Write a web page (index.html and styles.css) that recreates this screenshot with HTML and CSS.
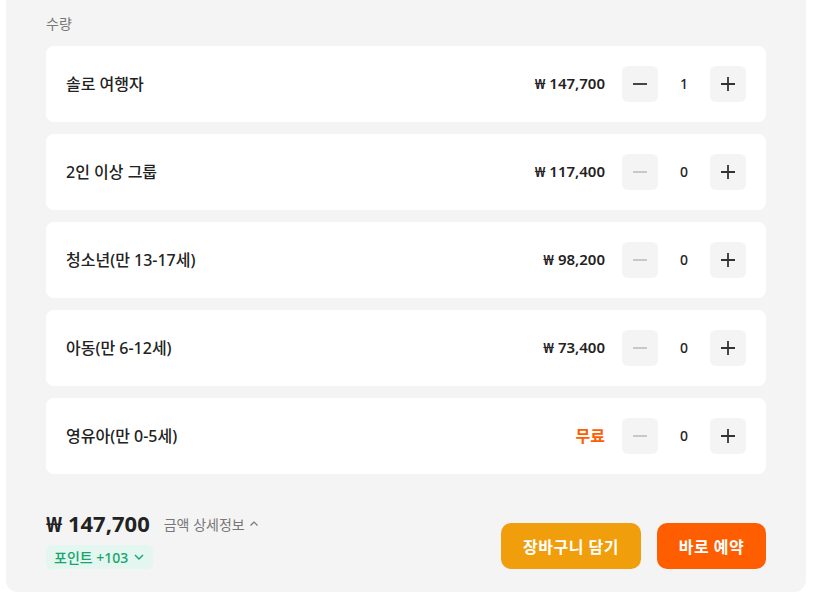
FILE: index.html
```html
<!DOCTYPE html>
<html lang="ko">
<head>
    <meta charset="UTF-8">
    <title>수량 선택</title>
    <link rel="stylesheet" href="styles.css">
</head>
<body>
    <div class="panel">
        <div class="section-label">수량</div>
        <div class="options">
            <div class="option">
                <span class="option-name">솔로 여행자</span>
                <span class="option-price">₩ 147,700</span>
                <div class="stepper">
                    <button class="step-btn"><svg width="14" height="14" viewBox="0 0 14 14"><path d="M0 7h14" stroke="currentColor" stroke-width="1.8"/></svg></button>
                    <span class="qty">1</span>
                    <button class="step-btn"><svg width="14" height="14" viewBox="0 0 14 14"><path d="M0 7h14M7 0v14" stroke="currentColor" stroke-width="1.8"/></svg></button>
                </div>
            </div>
            <div class="option">
                <span class="option-name">2인 이상 그룹</span>
                <span class="option-price">₩ 117,400</span>
                <div class="stepper">
                    <button class="step-btn disabled"><svg width="14" height="14" viewBox="0 0 14 14"><path d="M0 7h14" stroke="currentColor" stroke-width="1.8"/></svg></button>
                    <span class="qty">0</span>
                    <button class="step-btn"><svg width="14" height="14" viewBox="0 0 14 14"><path d="M0 7h14M7 0v14" stroke="currentColor" stroke-width="1.8"/></svg></button>
                </div>
            </div>
            <div class="option">
                <span class="option-name">청소년(만 13-17세)</span>
                <span class="option-price">₩ 98,200</span>
                <div class="stepper">
                    <button class="step-btn disabled"><svg width="14" height="14" viewBox="0 0 14 14"><path d="M0 7h14" stroke="currentColor" stroke-width="1.8"/></svg></button>
                    <span class="qty">0</span>
                    <button class="step-btn"><svg width="14" height="14" viewBox="0 0 14 14"><path d="M0 7h14M7 0v14" stroke="currentColor" stroke-width="1.8"/></svg></button>
                </div>
            </div>
            <div class="option">
                <span class="option-name">아동(만 6-12세)</span>
                <span class="option-price">₩ 73,400</span>
                <div class="stepper">
                    <button class="step-btn disabled"><svg width="14" height="14" viewBox="0 0 14 14"><path d="M0 7h14" stroke="currentColor" stroke-width="1.8"/></svg></button>
                    <span class="qty">0</span>
                    <button class="step-btn"><svg width="14" height="14" viewBox="0 0 14 14"><path d="M0 7h14M7 0v14" stroke="currentColor" stroke-width="1.8"/></svg></button>
                </div>
            </div>
            <div class="option">
                <span class="option-name">영유아(만 0-5세)</span>
                <span class="option-price free">무료</span>
                <div class="stepper">
                    <button class="step-btn disabled"><svg width="14" height="14" viewBox="0 0 14 14"><path d="M0 7h14" stroke="currentColor" stroke-width="1.8"/></svg></button>
                    <span class="qty">0</span>
                    <button class="step-btn"><svg width="14" height="14" viewBox="0 0 14 14"><path d="M0 7h14M7 0v14" stroke="currentColor" stroke-width="1.8"/></svg></button>
                </div>
            </div>
        </div>
        <div class="footer">
            <div class="summary">
                <div class="total-line">
                    <span class="total">₩ 147,700</span>
                    <span class="detail-link">금액 상세정보
                        <svg width="10" height="10" viewBox="0 0 10 10"><path d="M1.5 6.5L5 3l3.5 3.5" fill="none" stroke="currentColor" stroke-width="1.2"/></svg>
                    </span>
                </div>
                <span class="points">포인트 +103
                    <svg width="12" height="12" viewBox="0 0 12 12"><path d="M2 4l4 4 4-4" fill="none" stroke="currentColor" stroke-width="1.4"/></svg>
                </span>
            </div>
            <div class="actions">
                <button class="btn btn-cart">장바구니 담기</button>
                <button class="btn btn-book">바로 예약</button>
            </div>
        </div>
    </div>
</body>
</html>
```

FILE: styles.css
```css
body {
    margin: 0;
    background-color: #fff;
    font-family: "Noto Sans", "Noto Sans CJK KR", sans-serif;
    color: #222;
}
.panel {
    margin: 0 8px 0 6px;
    padding: 14px 40px 23px 40px;
    background-color: #f4f4f4;
    border-radius: 0 0 12px 12px;
}
.section-label {
    font-size: 14px;
    line-height: 19px;
    color: #777;
    margin-bottom: 13px;
}
.options {
    display: flex;
    flex-direction: column;
    gap: 12px;
}
.option {
    display: flex;
    align-items: center;
    height: 76px;
    padding: 0 20px;
    background: #fff;
    border-radius: 8px;
    box-sizing: border-box;
}
.option-name {
    flex: 1;
    font-size: 16px;
    font-weight: 500;
    margin-bottom: 3px;
}
.option-price {
    font-size: 15px;
    font-weight: 600;
    margin-right: 17px;
    margin-bottom: 3px;
}
.option-price.free {
    color: #ff5e00;
    font-size: 16px;
}
.stepper {
    display: flex;
    align-items: center;
}
.step-btn {
    width: 36px;
    height: 36px;
    border: none;
    border-radius: 6px;
    background-color: #f4f4f4;
    color: #333;
    display: flex;
    align-items: center;
    justify-content: center;
    padding: 0;
    cursor: pointer;
}
.step-btn.disabled {
    color: #c4c4c4;
    cursor: default;
}
.qty {
    width: 52px;
    text-align: center;
    font-size: 14px;
    font-weight: 500;
    margin-bottom: 2px;
}
.footer {
    display: flex;
    justify-content: space-between;
    align-items: flex-end;
    margin-top: 35px;
}
.summary {
    display: flex;
    flex-direction: column;
    align-items: flex-start;
    gap: 8px;
}
.total-line {
    display: flex;
    align-items: center;
    height: 28px;
}
.total {
    font-size: 22px;
    font-weight: 700;
    color: #222;
}
.detail-link {
    margin-left: 14px;
    font-size: 14px;
    color: #777;
    display: flex;
    align-items: center;
    gap: 4px;
    margin-top: 2px;
}
.points {
    display: flex;
    align-items: center;
    gap: 5px;
    height: 24px;
    padding: 0 8px;
    background-color: #e3f6ef;
    color: #16a56d;
    font-size: 14px;
    font-weight: 500;
    border-radius: 6px;
    box-sizing: border-box;
}
.actions {
    display: flex;
    gap: 16px;
}
.btn {
    height: 46px;
    border: none;
    border-radius: 10px;
    color: #fff;
    font-family: inherit;
    font-size: 16px;
    font-weight: 700;
    letter-spacing: 0.5px;
    cursor: pointer;
}
.btn-cart {
    width: 140px;
    background-color: #f09e0c;
}
.btn-book {
    width: 109px;
    background-color: #ff5e00;
}
```
